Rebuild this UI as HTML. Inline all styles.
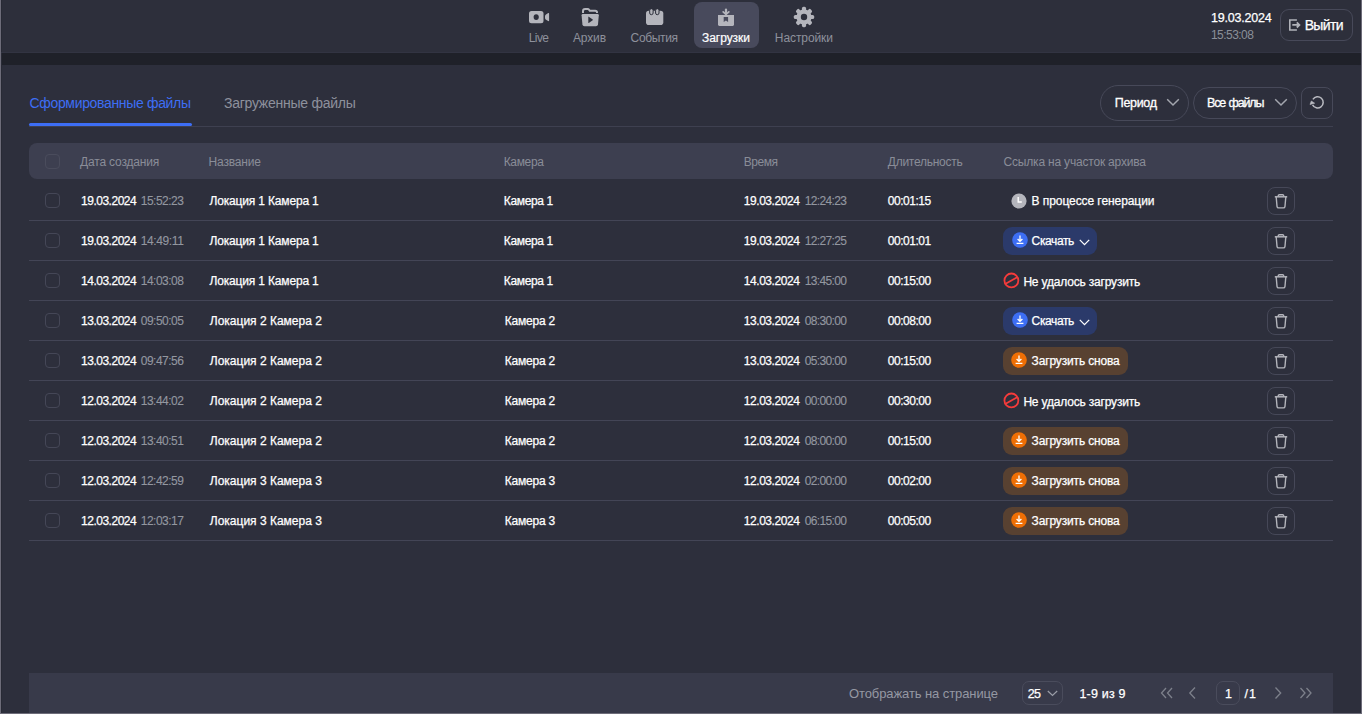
<!DOCTYPE html>
<html><head><meta charset="utf-8">
<style>
*{box-sizing:border-box;margin:0;padding:0}
html,body{width:1362px;height:714px;overflow:hidden;background:#2d2f3b;font-family:"Liberation Sans",sans-serif;}
.abs{position:absolute}
.t{position:absolute;white-space:pre}
#frame{position:absolute;left:0;top:0;width:1362px;height:714px;border-left:1px solid #6d6c79;border-right:1px solid #6d6c79;border-bottom:1px solid #6d6c79;}
#hdr{position:absolute;left:1px;top:0;width:1360px;height:53px;background:#2d2f3b}
#band{position:absolute;left:1px;top:53px;width:1360px;height:12px;background:#1f2129}
#panel{position:absolute;left:2px;top:65px;width:1359px;height:648px;background:#2d2f3c;border-radius:3px 3px 0 0}
#lcol{position:absolute;left:1px;top:0;width:1px;height:713px;background:#282a35}
.box{position:absolute}
</style></head><body>
<div id="hdr"></div>
<div id="band"></div>
<div id="panel"></div>
<div id="lcol"></div>
<div class="box" style="left:1px;top:52px;width:1360px;height:1px;background:#323442"></div>
<div class="box" style="left:694px;top:2px;width:65px;height:46px;background:#484a5c;border-radius:8px"></div>
<svg class="abs" style="left:529px;top:11px" width="21" height="13" viewBox="0 0 21 13"><rect x="0" y="0" width="14.5" height="12.2" rx="2.5" fill="#b4b5bc"/><ellipse cx="7.2" cy="6.1" rx="2.6" ry="2.9" fill="#2d2f3b"/><path d="M16 5.2 Q16 3.9 17 3.4 L19.2 2.1 Q20.1 1.7 20.1 2.7 V9.5 Q20.1 10.5 19.2 10.1 L17 8.8 Q16 8.3 16 7.1 Z" fill="#b4b5bc"/></svg>
<svg class="abs" style="left:581px;top:8px" width="19" height="19" viewBox="0 0 19 19"><path d="M2 4.9 V3.2 Q2 1.1 4.1 1.1 H6.6 Q7.6 1.1 8.3 2 L8.8 2.8 H14.2 Q16 2.8 16 4.6 V4.9" fill="none" stroke="#b4b5bc" stroke-width="2"/><path d="M0.6 7.2 Q0.6 6 1.8 6 H16.6 Q17.8 6 17.8 7.2 L17 16.3 Q16.8 18.2 14.9 18.2 H3.5 Q1.6 18.2 1.4 16.3 Z" fill="#b4b5bc"/><path d="M7.3 9 Q7.3 8.4 7.8 8.7 L11.7 11.5 Q12.1 11.9 11.7 12.2 L7.8 15 Q7.3 15.3 7.3 14.7 Z" fill="#2d2f3b"/></svg>
<svg class="abs" style="left:646px;top:9px" width="18" height="16" viewBox="0 0 18 16"><rect x="0" y="1.8" width="17.3" height="14.2" rx="2.8" fill="#b4b5bc"/><rect x="3.7" y="-0.3" width="3.4" height="6" rx="1.7" fill="#b4b5bc" stroke="#2d2f3b" stroke-width="1"/><rect x="9.6" y="-0.3" width="3.4" height="6" rx="1.7" fill="#b4b5bc" stroke="#2d2f3b" stroke-width="1"/></svg>
<svg class="abs" style="left:717px;top:7px" width="18" height="20" viewBox="0 0 18 20"><path d="M9 2.6 V6.4" stroke="#b4b5bc" stroke-width="2.2" stroke-linecap="round"/><path d="M6.2 4.9 L9 7.4 L11.8 4.9" fill="none" stroke="#b4b5bc" stroke-width="1.8" stroke-linecap="round" stroke-linejoin="round"/><path d="M1 8 H17 V17.6 Q17 18.9 15.7 18.9 H2.3 Q1 18.9 1 17.6 Z" fill="#b4b5bc"/><path d="M6.7 9.9 H11.1 V15.1 L8.9 13.6 L6.7 15.1 Z" fill="#484a5c"/></svg>
<svg class="abs" style="left:793px;top:6px" width="22" height="22" viewBox="-11 -11 22 22"><rect x="-2.1" y="-10.2" width="4.2" height="5" rx="1.6" transform="rotate(0)" fill="#b4b5bc"/><rect x="-2.1" y="-10.2" width="4.2" height="5" rx="1.6" transform="rotate(45)" fill="#b4b5bc"/><rect x="-2.1" y="-10.2" width="4.2" height="5" rx="1.6" transform="rotate(90)" fill="#b4b5bc"/><rect x="-2.1" y="-10.2" width="4.2" height="5" rx="1.6" transform="rotate(135)" fill="#b4b5bc"/><rect x="-2.1" y="-10.2" width="4.2" height="5" rx="1.6" transform="rotate(180)" fill="#b4b5bc"/><rect x="-2.1" y="-10.2" width="4.2" height="5" rx="1.6" transform="rotate(225)" fill="#b4b5bc"/><rect x="-2.1" y="-10.2" width="4.2" height="5" rx="1.6" transform="rotate(270)" fill="#b4b5bc"/><rect x="-2.1" y="-10.2" width="4.2" height="5" rx="1.6" transform="rotate(315)" fill="#b4b5bc"/><circle r="7.6" fill="#b4b5bc"/><circle r="3.2" fill="#2d2f3b"/></svg>
<div class="t" style="left:528.70px;top:31px;font-size:12px;line-height:14px;color:#8e919c;letter-spacing:-0.567px;">Live</div>
<div class="t" style="left:573.00px;top:31px;font-size:12px;line-height:14px;color:#8e919c;letter-spacing:-0.150px;">Архив</div>
<div class="t" style="left:630.60px;top:31px;font-size:12px;line-height:14px;color:#8e919c;letter-spacing:-0.358px;">События</div>
<div class="t" style="left:702.00px;top:31px;font-size:12px;line-height:14px;color:#ffffff;-webkit-text-stroke:0.2px #ffffff;letter-spacing:-0.043px;">Загрузки</div>
<div class="t" style="left:774.80px;top:31px;font-size:12px;line-height:14px;color:#8e919c;letter-spacing:-0.081px;">Настройки</div>
<div class="t" style="left:1211.00px;top:11px;font-size:12.5px;line-height:14px;color:#ffffff;-webkit-text-stroke:0.25px #ffffff;letter-spacing:-0.217px;">19.03.2024</div>
<div class="t" style="left:1211.00px;top:28px;font-size:12px;line-height:14px;color:#8b8f99;letter-spacing:-0.557px;">15:53:08</div>
<div class="box" style="left:1280px;top:9px;width:73px;height:32px;border:1px solid #474959;border-radius:9px"></div>
<svg class="abs" style="left:1288px;top:18px" width="14" height="14" viewBox="0 0 14 14"><path d="M8.9 2 H1.8 V12 H8.9" fill="none" stroke="#b0b2b9" stroke-width="1.6"/><path d="M4.3 6.9 H11 M8.8 4.3 L11.4 6.9 L8.8 9.5" fill="none" stroke="#b0b2b9" stroke-width="1.8"/></svg>
<div class="t" style="left:1304.70px;top:17px;font-size:14px;line-height:16px;color:#ffffff;-webkit-text-stroke:0.25px #ffffff;letter-spacing:-0.663px;">Выйти</div>
<div class="t" style="left:29.50px;top:95px;font-size:14px;line-height:16px;color:#3d6ef5;letter-spacing:-0.334px;">Сформированные файлы</div>
<div class="t" style="left:224.00px;top:95px;font-size:14px;line-height:16px;color:#8e919c;letter-spacing:-0.253px;">Загруженные файлы</div>
<div class="box" style="left:29px;top:126px;width:1304px;height:1px;background:#3e4050"></div>
<div class="box" style="left:29px;top:123px;width:163px;height:3px;background:#3d6ef5;border-radius:2px"></div>
<div class="box" style="left:1100px;top:85px;width:89px;height:36px;border:1px solid #474959;border-radius:18px"></div>
<div class="t" style="left:1114.80px;top:96px;font-size:12.5px;line-height:14px;color:#ffffff;-webkit-text-stroke:0.3px #ffffff;letter-spacing:-0.330px;">Период</div>
<svg class="abs" style="left:1166px;top:98px" width="14" height="9" viewBox="0 0 14 9"><path d="M1.2 1.3 L7 7 L12.8 1.3" fill="none" stroke="#a3a6ae" stroke-width="1.5"/></svg>
<div class="box" style="left:1193px;top:87px;width:104px;height:32px;border:1px solid #474959;border-radius:16px"></div>
<div class="t" style="left:1207.00px;top:96px;font-size:12.5px;line-height:14px;color:#ffffff;-webkit-text-stroke:0.3px #ffffff;letter-spacing:-1.163px;word-spacing:1.2px;">Все файлы</div>
<svg class="abs" style="left:1274px;top:98px" width="14" height="9" viewBox="0 0 14 9"><path d="M1.2 1.3 L7 7 L12.8 1.3" fill="none" stroke="#a3a6ae" stroke-width="1.5"/></svg>
<div class="box" style="left:1301px;top:87px;width:32px;height:32px;border:1px solid #474959;border-radius:8px"></div>
<svg class="abs" style="left:1305px;top:91px" width="24" height="24" viewBox="0 0 24 24"><path d="M7.9 8.3 A5.6 5.6 0 1 1 7.6 13.9" fill="none" stroke="#b9bac1" stroke-width="1.5"/><path d="M5 13.5 L6.3 10 L9.7 12.2 Z" fill="#b9bac1" stroke="#b9bac1" stroke-width="0.6" stroke-linejoin="round"/></svg>
<div class="box" style="left:29px;top:143px;width:1304px;height:36px;background:#3d3f50;border-radius:8px"></div>
<div class="box" style="left:45px;top:154px;width:15px;height:15px;border:1px solid #4a4c5c;border-radius:4px"></div>
<div class="t" style="left:80.00px;top:155px;font-size:12px;line-height:14px;color:#8a8d98;letter-spacing:-0.171px;">Дата создания</div>
<div class="t" style="left:208.50px;top:155px;font-size:12px;line-height:14px;color:#8a8d98;letter-spacing:-0.164px;">Название</div>
<div class="t" style="left:503.70px;top:155px;font-size:12px;line-height:14px;color:#8a8d98;letter-spacing:-0.330px;">Камера</div>
<div class="t" style="left:743.80px;top:155px;font-size:12px;line-height:14px;color:#8a8d98;letter-spacing:-0.475px;">Время</div>
<div class="t" style="left:887.80px;top:155px;font-size:12px;line-height:14px;color:#8a8d98;letter-spacing:-0.264px;">Длительность</div>
<div class="t" style="left:1003.60px;top:155px;font-size:12px;line-height:14px;color:#8a8d98;letter-spacing:-0.193px;">Ссылка на участок архива</div>
<div class="box" style="left:29px;top:220px;width:1304px;height:1px;background:#434556"></div>
<div class="box" style="left:45px;top:193px;width:15px;height:15px;border:1px solid #454757;border-radius:4px"></div>
<div class="t" style="left:81.00px;top:194px;font-size:12px;line-height:14px;color:#ffffff;-webkit-text-stroke:0.25px #ffffff;letter-spacing:-0.483px;">19.03.2024</div>
<div class="t" style="left:140.80px;top:194px;font-size:12px;line-height:14px;color:#9397a0;-webkit-text-stroke:0.12px #9397a0;letter-spacing:-0.529px;">15:52:23</div>
<div class="t" style="left:209.50px;top:194px;font-size:12px;line-height:14px;color:#ffffff;-webkit-text-stroke:0.25px #ffffff;letter-spacing:-0.165px;">Локация 1 Камера 1</div>
<div class="t" style="left:503.80px;top:194px;font-size:12px;line-height:14px;color:#ffffff;-webkit-text-stroke:0.25px #ffffff;letter-spacing:-0.350px;">Камера 1</div>
<div class="t" style="left:743.80px;top:194px;font-size:12px;line-height:14px;color:#ffffff;-webkit-text-stroke:0.25px #ffffff;letter-spacing:-0.450px;">19.03.2024</div>
<div class="t" style="left:804.70px;top:194px;font-size:12px;line-height:14px;color:#9397a0;-webkit-text-stroke:0.12px #9397a0;letter-spacing:-0.629px;">12:24:23</div>
<div class="t" style="left:887.80px;top:194px;font-size:12px;line-height:14px;color:#ffffff;-webkit-text-stroke:0.25px #ffffff;letter-spacing:-0.471px;">00:01:15</div>
<div class="box" style="left:1267px;top:187px;width:28px;height:28px;border:1px solid #464858;border-radius:8px"></div>
<svg class="abs" style="left:1274px;top:194px" width="14" height="16" viewBox="0 0 14 16"><path d="M4.3 2.2 V1.8 Q4.3 0.8 5.3 0.8 H8.7 Q9.7 0.8 9.7 1.8 V2.2" fill="none" stroke="#b4b5bc" stroke-width="1.4"/><path d="M0.8 2.8 H13.2" stroke="#b4b5bc" stroke-width="1.5"/><path d="M2.2 3 L3 12.3 Q3.2 13.9 4.6 13.9 H9.4 Q10.8 13.9 11 12.3 L11.8 3" fill="none" stroke="#b4b5bc" stroke-width="1.4"/></svg>
<svg class="abs" style="left:1011.3px;top:192.9px" width="16" height="16" viewBox="0 0 16 16"><circle cx="8" cy="8" r="7.6" fill="#b4b5bc"/><path d="M7.2 4 V9 H10.8" fill="none" stroke="#ffffff" stroke-width="1.4"/></svg>
<div class="t" style="left:1031.60px;top:194px;font-size:12px;line-height:14px;color:#ffffff;-webkit-text-stroke:0.25px #ffffff;letter-spacing:-0.076px;">В процессе генерации</div>
<div class="box" style="left:29px;top:260px;width:1304px;height:1px;background:#434556"></div>
<div class="box" style="left:45px;top:233px;width:15px;height:15px;border:1px solid #454757;border-radius:4px"></div>
<div class="t" style="left:81.00px;top:234px;font-size:12px;line-height:14px;color:#ffffff;-webkit-text-stroke:0.25px #ffffff;letter-spacing:-0.483px;">19.03.2024</div>
<div class="t" style="left:140.80px;top:234px;font-size:12px;line-height:14px;color:#9397a0;-webkit-text-stroke:0.12px #9397a0;letter-spacing:-0.400px;">14:49:11</div>
<div class="t" style="left:209.50px;top:234px;font-size:12px;line-height:14px;color:#ffffff;-webkit-text-stroke:0.25px #ffffff;letter-spacing:-0.165px;">Локация 1 Камера 1</div>
<div class="t" style="left:503.80px;top:234px;font-size:12px;line-height:14px;color:#ffffff;-webkit-text-stroke:0.25px #ffffff;letter-spacing:-0.350px;">Камера 1</div>
<div class="t" style="left:743.80px;top:234px;font-size:12px;line-height:14px;color:#ffffff;-webkit-text-stroke:0.25px #ffffff;letter-spacing:-0.450px;">19.03.2024</div>
<div class="t" style="left:804.70px;top:234px;font-size:12px;line-height:14px;color:#9397a0;-webkit-text-stroke:0.12px #9397a0;letter-spacing:-0.629px;">12:27:25</div>
<div class="t" style="left:887.80px;top:234px;font-size:12px;line-height:14px;color:#ffffff;-webkit-text-stroke:0.25px #ffffff;letter-spacing:-0.471px;">00:01:01</div>
<div class="box" style="left:1267px;top:227px;width:28px;height:28px;border:1px solid #464858;border-radius:8px"></div>
<svg class="abs" style="left:1274px;top:234px" width="14" height="16" viewBox="0 0 14 16"><path d="M4.3 2.2 V1.8 Q4.3 0.8 5.3 0.8 H8.7 Q9.7 0.8 9.7 1.8 V2.2" fill="none" stroke="#b4b5bc" stroke-width="1.4"/><path d="M0.8 2.8 H13.2" stroke="#b4b5bc" stroke-width="1.5"/><path d="M2.2 3 L3 12.3 Q3.2 13.9 4.6 13.9 H9.4 Q10.8 13.9 11 12.3 L11.8 3" fill="none" stroke="#b4b5bc" stroke-width="1.4"/></svg>
<div class="box" style="left:1003px;top:227px;width:94px;height:28px;background:#2b3a6a;border-radius:9px"></div>
<svg class="abs" style="left:1011.5px;top:232px" width="16" height="16" viewBox="0 0 16 16"><circle cx="8" cy="8" r="7.8" fill="#3d6ef5"/><path d="M8 3.6 V9.2 M5.6 7 L8 9.4 L10.4 7 M4.6 11.4 H11.4" fill="none" stroke="#ffffff" stroke-width="1.3"/></svg>
<div class="t" style="left:1031.60px;top:234px;font-size:12px;line-height:14px;color:#ffffff;-webkit-text-stroke:0.25px #ffffff;letter-spacing:-0.383px;">Скачать</div>
<svg class="abs" style="left:1078.5px;top:238.5px" width="11" height="7" viewBox="0 0 11 7"><path d="M0.8 0.9 L5.5 5.6 L10.2 0.9" fill="none" stroke="#ffffff" stroke-width="1.3"/></svg>
<div class="box" style="left:29px;top:300px;width:1304px;height:1px;background:#434556"></div>
<div class="box" style="left:45px;top:273px;width:15px;height:15px;border:1px solid #454757;border-radius:4px"></div>
<div class="t" style="left:81.00px;top:274px;font-size:12px;line-height:14px;color:#ffffff;-webkit-text-stroke:0.25px #ffffff;letter-spacing:-0.483px;">14.03.2024</div>
<div class="t" style="left:140.80px;top:274px;font-size:12px;line-height:14px;color:#9397a0;-webkit-text-stroke:0.12px #9397a0;letter-spacing:-0.529px;">14:03:08</div>
<div class="t" style="left:209.50px;top:274px;font-size:12px;line-height:14px;color:#ffffff;-webkit-text-stroke:0.25px #ffffff;letter-spacing:-0.165px;">Локация 1 Камера 1</div>
<div class="t" style="left:503.80px;top:274px;font-size:12px;line-height:14px;color:#ffffff;-webkit-text-stroke:0.25px #ffffff;letter-spacing:-0.350px;">Камера 1</div>
<div class="t" style="left:743.80px;top:274px;font-size:12px;line-height:14px;color:#ffffff;-webkit-text-stroke:0.25px #ffffff;letter-spacing:-0.450px;">14.03.2024</div>
<div class="t" style="left:804.70px;top:274px;font-size:12px;line-height:14px;color:#9397a0;-webkit-text-stroke:0.12px #9397a0;letter-spacing:-0.629px;">13:45:00</div>
<div class="t" style="left:887.80px;top:274px;font-size:12px;line-height:14px;color:#ffffff;-webkit-text-stroke:0.25px #ffffff;letter-spacing:-0.471px;">00:15:00</div>
<div class="box" style="left:1267px;top:267px;width:28px;height:28px;border:1px solid #464858;border-radius:8px"></div>
<svg class="abs" style="left:1274px;top:274px" width="14" height="16" viewBox="0 0 14 16"><path d="M4.3 2.2 V1.8 Q4.3 0.8 5.3 0.8 H8.7 Q9.7 0.8 9.7 1.8 V2.2" fill="none" stroke="#b4b5bc" stroke-width="1.4"/><path d="M0.8 2.8 H13.2" stroke="#b4b5bc" stroke-width="1.5"/><path d="M2.2 3 L3 12.3 Q3.2 13.9 4.6 13.9 H9.4 Q10.8 13.9 11 12.3 L11.8 3" fill="none" stroke="#b4b5bc" stroke-width="1.4"/></svg>
<svg class="abs" style="left:1003px;top:272px" width="17" height="17" viewBox="0 0 17 17"><circle cx="8.4" cy="8.45" r="6.95" fill="none" stroke="#f53b3b" stroke-width="1.8"/><path d="M2.6 11.7 L14.2 5.2" stroke="#f53b3b" stroke-width="1.8"/></svg>
<div class="t" style="left:1023.40px;top:275px;font-size:12px;line-height:14px;color:#ffffff;-webkit-text-stroke:0.25px #ffffff;letter-spacing:-0.184px;">Не удалось загрузить</div>
<div class="box" style="left:29px;top:340px;width:1304px;height:1px;background:#434556"></div>
<div class="box" style="left:45px;top:313px;width:15px;height:15px;border:1px solid #454757;border-radius:4px"></div>
<div class="t" style="left:81.00px;top:314px;font-size:12px;line-height:14px;color:#ffffff;-webkit-text-stroke:0.25px #ffffff;letter-spacing:-0.483px;">13.03.2024</div>
<div class="t" style="left:140.80px;top:314px;font-size:12px;line-height:14px;color:#9397a0;-webkit-text-stroke:0.12px #9397a0;letter-spacing:-0.529px;">09:50:05</div>
<div class="t" style="left:209.80px;top:314px;font-size:12px;line-height:14px;color:#ffffff;-webkit-text-stroke:0.25px #ffffff;">Локация 2 Камера 2</div>
<div class="t" style="left:504.80px;top:314px;font-size:12px;line-height:14px;color:#ffffff;-webkit-text-stroke:0.25px #ffffff;letter-spacing:-0.236px;">Камера 2</div>
<div class="t" style="left:743.80px;top:314px;font-size:12px;line-height:14px;color:#ffffff;-webkit-text-stroke:0.25px #ffffff;letter-spacing:-0.450px;">13.03.2024</div>
<div class="t" style="left:804.70px;top:314px;font-size:12px;line-height:14px;color:#9397a0;-webkit-text-stroke:0.12px #9397a0;letter-spacing:-0.629px;">08:30:00</div>
<div class="t" style="left:887.80px;top:314px;font-size:12px;line-height:14px;color:#ffffff;-webkit-text-stroke:0.25px #ffffff;letter-spacing:-0.471px;">00:08:00</div>
<div class="box" style="left:1267px;top:307px;width:28px;height:28px;border:1px solid #464858;border-radius:8px"></div>
<svg class="abs" style="left:1274px;top:314px" width="14" height="16" viewBox="0 0 14 16"><path d="M4.3 2.2 V1.8 Q4.3 0.8 5.3 0.8 H8.7 Q9.7 0.8 9.7 1.8 V2.2" fill="none" stroke="#b4b5bc" stroke-width="1.4"/><path d="M0.8 2.8 H13.2" stroke="#b4b5bc" stroke-width="1.5"/><path d="M2.2 3 L3 12.3 Q3.2 13.9 4.6 13.9 H9.4 Q10.8 13.9 11 12.3 L11.8 3" fill="none" stroke="#b4b5bc" stroke-width="1.4"/></svg>
<div class="box" style="left:1003px;top:307px;width:94px;height:28px;background:#2b3a6a;border-radius:9px"></div>
<svg class="abs" style="left:1011.5px;top:312px" width="16" height="16" viewBox="0 0 16 16"><circle cx="8" cy="8" r="7.8" fill="#3d6ef5"/><path d="M8 3.6 V9.2 M5.6 7 L8 9.4 L10.4 7 M4.6 11.4 H11.4" fill="none" stroke="#ffffff" stroke-width="1.3"/></svg>
<div class="t" style="left:1031.60px;top:314px;font-size:12px;line-height:14px;color:#ffffff;-webkit-text-stroke:0.25px #ffffff;letter-spacing:-0.383px;">Скачать</div>
<svg class="abs" style="left:1078.5px;top:318.5px" width="11" height="7" viewBox="0 0 11 7"><path d="M0.8 0.9 L5.5 5.6 L10.2 0.9" fill="none" stroke="#ffffff" stroke-width="1.3"/></svg>
<div class="box" style="left:29px;top:380px;width:1304px;height:1px;background:#434556"></div>
<div class="box" style="left:45px;top:353px;width:15px;height:15px;border:1px solid #454757;border-radius:4px"></div>
<div class="t" style="left:81.00px;top:354px;font-size:12px;line-height:14px;color:#ffffff;-webkit-text-stroke:0.25px #ffffff;letter-spacing:-0.483px;">13.03.2024</div>
<div class="t" style="left:140.80px;top:354px;font-size:12px;line-height:14px;color:#9397a0;-webkit-text-stroke:0.12px #9397a0;letter-spacing:-0.529px;">09:47:56</div>
<div class="t" style="left:209.80px;top:354px;font-size:12px;line-height:14px;color:#ffffff;-webkit-text-stroke:0.25px #ffffff;">Локация 2 Камера 2</div>
<div class="t" style="left:504.80px;top:354px;font-size:12px;line-height:14px;color:#ffffff;-webkit-text-stroke:0.25px #ffffff;letter-spacing:-0.236px;">Камера 2</div>
<div class="t" style="left:743.80px;top:354px;font-size:12px;line-height:14px;color:#ffffff;-webkit-text-stroke:0.25px #ffffff;letter-spacing:-0.450px;">13.03.2024</div>
<div class="t" style="left:804.70px;top:354px;font-size:12px;line-height:14px;color:#9397a0;-webkit-text-stroke:0.12px #9397a0;letter-spacing:-0.629px;">05:30:00</div>
<div class="t" style="left:887.80px;top:354px;font-size:12px;line-height:14px;color:#ffffff;-webkit-text-stroke:0.25px #ffffff;letter-spacing:-0.471px;">00:15:00</div>
<div class="box" style="left:1267px;top:347px;width:28px;height:28px;border:1px solid #464858;border-radius:8px"></div>
<svg class="abs" style="left:1274px;top:354px" width="14" height="16" viewBox="0 0 14 16"><path d="M4.3 2.2 V1.8 Q4.3 0.8 5.3 0.8 H8.7 Q9.7 0.8 9.7 1.8 V2.2" fill="none" stroke="#b4b5bc" stroke-width="1.4"/><path d="M0.8 2.8 H13.2" stroke="#b4b5bc" stroke-width="1.5"/><path d="M2.2 3 L3 12.3 Q3.2 13.9 4.6 13.9 H9.4 Q10.8 13.9 11 12.3 L11.8 3" fill="none" stroke="#b4b5bc" stroke-width="1.4"/></svg>
<div class="box" style="left:1003px;top:347px;width:125px;height:28px;background:#584131;border-radius:9px"></div>
<svg class="abs" style="left:1011px;top:352px" width="16" height="16" viewBox="0 0 16 16"><circle cx="8" cy="8" r="7.8" fill="#ef6f05"/><path d="M8 3.6 V9.2 M5.6 7 L8 9.4 L10.4 7 M4.6 11.4 H11.4" fill="none" stroke="#ffffff" stroke-width="1.3"/></svg>
<div class="t" style="left:1031.60px;top:354px;font-size:12px;line-height:14px;color:#ffffff;-webkit-text-stroke:0.25px #ffffff;letter-spacing:-0.154px;">Загрузить снова</div>
<div class="box" style="left:29px;top:420px;width:1304px;height:1px;background:#434556"></div>
<div class="box" style="left:45px;top:393px;width:15px;height:15px;border:1px solid #454757;border-radius:4px"></div>
<div class="t" style="left:81.00px;top:394px;font-size:12px;line-height:14px;color:#ffffff;-webkit-text-stroke:0.25px #ffffff;letter-spacing:-0.483px;">12.03.2024</div>
<div class="t" style="left:140.80px;top:394px;font-size:12px;line-height:14px;color:#9397a0;-webkit-text-stroke:0.12px #9397a0;letter-spacing:-0.529px;">13:44:02</div>
<div class="t" style="left:209.80px;top:394px;font-size:12px;line-height:14px;color:#ffffff;-webkit-text-stroke:0.25px #ffffff;">Локация 2 Камера 2</div>
<div class="t" style="left:504.80px;top:394px;font-size:12px;line-height:14px;color:#ffffff;-webkit-text-stroke:0.25px #ffffff;letter-spacing:-0.236px;">Камера 2</div>
<div class="t" style="left:743.80px;top:394px;font-size:12px;line-height:14px;color:#ffffff;-webkit-text-stroke:0.25px #ffffff;letter-spacing:-0.450px;">12.03.2024</div>
<div class="t" style="left:804.70px;top:394px;font-size:12px;line-height:14px;color:#9397a0;-webkit-text-stroke:0.12px #9397a0;letter-spacing:-0.629px;">00:00:00</div>
<div class="t" style="left:887.80px;top:394px;font-size:12px;line-height:14px;color:#ffffff;-webkit-text-stroke:0.25px #ffffff;letter-spacing:-0.471px;">00:30:00</div>
<div class="box" style="left:1267px;top:387px;width:28px;height:28px;border:1px solid #464858;border-radius:8px"></div>
<svg class="abs" style="left:1274px;top:394px" width="14" height="16" viewBox="0 0 14 16"><path d="M4.3 2.2 V1.8 Q4.3 0.8 5.3 0.8 H8.7 Q9.7 0.8 9.7 1.8 V2.2" fill="none" stroke="#b4b5bc" stroke-width="1.4"/><path d="M0.8 2.8 H13.2" stroke="#b4b5bc" stroke-width="1.5"/><path d="M2.2 3 L3 12.3 Q3.2 13.9 4.6 13.9 H9.4 Q10.8 13.9 11 12.3 L11.8 3" fill="none" stroke="#b4b5bc" stroke-width="1.4"/></svg>
<svg class="abs" style="left:1003px;top:392px" width="17" height="17" viewBox="0 0 17 17"><circle cx="8.4" cy="8.45" r="6.95" fill="none" stroke="#f53b3b" stroke-width="1.8"/><path d="M2.6 11.7 L14.2 5.2" stroke="#f53b3b" stroke-width="1.8"/></svg>
<div class="t" style="left:1023.40px;top:395px;font-size:12px;line-height:14px;color:#ffffff;-webkit-text-stroke:0.25px #ffffff;letter-spacing:-0.184px;">Не удалось загрузить</div>
<div class="box" style="left:29px;top:460px;width:1304px;height:1px;background:#434556"></div>
<div class="box" style="left:45px;top:433px;width:15px;height:15px;border:1px solid #454757;border-radius:4px"></div>
<div class="t" style="left:81.00px;top:434px;font-size:12px;line-height:14px;color:#ffffff;-webkit-text-stroke:0.25px #ffffff;letter-spacing:-0.483px;">12.03.2024</div>
<div class="t" style="left:140.80px;top:434px;font-size:12px;line-height:14px;color:#9397a0;-webkit-text-stroke:0.12px #9397a0;letter-spacing:-0.529px;">13:40:51</div>
<div class="t" style="left:209.80px;top:434px;font-size:12px;line-height:14px;color:#ffffff;-webkit-text-stroke:0.25px #ffffff;">Локация 2 Камера 2</div>
<div class="t" style="left:504.80px;top:434px;font-size:12px;line-height:14px;color:#ffffff;-webkit-text-stroke:0.25px #ffffff;letter-spacing:-0.236px;">Камера 2</div>
<div class="t" style="left:743.80px;top:434px;font-size:12px;line-height:14px;color:#ffffff;-webkit-text-stroke:0.25px #ffffff;letter-spacing:-0.450px;">12.03.2024</div>
<div class="t" style="left:804.70px;top:434px;font-size:12px;line-height:14px;color:#9397a0;-webkit-text-stroke:0.12px #9397a0;letter-spacing:-0.629px;">08:00:00</div>
<div class="t" style="left:887.80px;top:434px;font-size:12px;line-height:14px;color:#ffffff;-webkit-text-stroke:0.25px #ffffff;letter-spacing:-0.471px;">00:15:00</div>
<div class="box" style="left:1267px;top:427px;width:28px;height:28px;border:1px solid #464858;border-radius:8px"></div>
<svg class="abs" style="left:1274px;top:434px" width="14" height="16" viewBox="0 0 14 16"><path d="M4.3 2.2 V1.8 Q4.3 0.8 5.3 0.8 H8.7 Q9.7 0.8 9.7 1.8 V2.2" fill="none" stroke="#b4b5bc" stroke-width="1.4"/><path d="M0.8 2.8 H13.2" stroke="#b4b5bc" stroke-width="1.5"/><path d="M2.2 3 L3 12.3 Q3.2 13.9 4.6 13.9 H9.4 Q10.8 13.9 11 12.3 L11.8 3" fill="none" stroke="#b4b5bc" stroke-width="1.4"/></svg>
<div class="box" style="left:1003px;top:427px;width:125px;height:28px;background:#584131;border-radius:9px"></div>
<svg class="abs" style="left:1011px;top:432px" width="16" height="16" viewBox="0 0 16 16"><circle cx="8" cy="8" r="7.8" fill="#ef6f05"/><path d="M8 3.6 V9.2 M5.6 7 L8 9.4 L10.4 7 M4.6 11.4 H11.4" fill="none" stroke="#ffffff" stroke-width="1.3"/></svg>
<div class="t" style="left:1031.60px;top:434px;font-size:12px;line-height:14px;color:#ffffff;-webkit-text-stroke:0.25px #ffffff;letter-spacing:-0.154px;">Загрузить снова</div>
<div class="box" style="left:29px;top:500px;width:1304px;height:1px;background:#434556"></div>
<div class="box" style="left:45px;top:473px;width:15px;height:15px;border:1px solid #454757;border-radius:4px"></div>
<div class="t" style="left:81.00px;top:474px;font-size:12px;line-height:14px;color:#ffffff;-webkit-text-stroke:0.25px #ffffff;letter-spacing:-0.483px;">12.03.2024</div>
<div class="t" style="left:140.80px;top:474px;font-size:12px;line-height:14px;color:#9397a0;-webkit-text-stroke:0.12px #9397a0;letter-spacing:-0.529px;">12:42:59</div>
<div class="t" style="left:209.80px;top:474px;font-size:12px;line-height:14px;color:#ffffff;-webkit-text-stroke:0.25px #ffffff;">Локация 3 Камера 3</div>
<div class="t" style="left:504.80px;top:474px;font-size:12px;line-height:14px;color:#ffffff;-webkit-text-stroke:0.25px #ffffff;letter-spacing:-0.236px;">Камера 3</div>
<div class="t" style="left:743.80px;top:474px;font-size:12px;line-height:14px;color:#ffffff;-webkit-text-stroke:0.25px #ffffff;letter-spacing:-0.450px;">12.03.2024</div>
<div class="t" style="left:804.70px;top:474px;font-size:12px;line-height:14px;color:#9397a0;-webkit-text-stroke:0.12px #9397a0;letter-spacing:-0.629px;">02:00:00</div>
<div class="t" style="left:887.80px;top:474px;font-size:12px;line-height:14px;color:#ffffff;-webkit-text-stroke:0.25px #ffffff;letter-spacing:-0.471px;">00:02:00</div>
<div class="box" style="left:1267px;top:467px;width:28px;height:28px;border:1px solid #464858;border-radius:8px"></div>
<svg class="abs" style="left:1274px;top:474px" width="14" height="16" viewBox="0 0 14 16"><path d="M4.3 2.2 V1.8 Q4.3 0.8 5.3 0.8 H8.7 Q9.7 0.8 9.7 1.8 V2.2" fill="none" stroke="#b4b5bc" stroke-width="1.4"/><path d="M0.8 2.8 H13.2" stroke="#b4b5bc" stroke-width="1.5"/><path d="M2.2 3 L3 12.3 Q3.2 13.9 4.6 13.9 H9.4 Q10.8 13.9 11 12.3 L11.8 3" fill="none" stroke="#b4b5bc" stroke-width="1.4"/></svg>
<div class="box" style="left:1003px;top:467px;width:125px;height:28px;background:#584131;border-radius:9px"></div>
<svg class="abs" style="left:1011px;top:472px" width="16" height="16" viewBox="0 0 16 16"><circle cx="8" cy="8" r="7.8" fill="#ef6f05"/><path d="M8 3.6 V9.2 M5.6 7 L8 9.4 L10.4 7 M4.6 11.4 H11.4" fill="none" stroke="#ffffff" stroke-width="1.3"/></svg>
<div class="t" style="left:1031.60px;top:474px;font-size:12px;line-height:14px;color:#ffffff;-webkit-text-stroke:0.25px #ffffff;letter-spacing:-0.154px;">Загрузить снова</div>
<div class="box" style="left:29px;top:540px;width:1304px;height:1px;background:#434556"></div>
<div class="box" style="left:45px;top:513px;width:15px;height:15px;border:1px solid #454757;border-radius:4px"></div>
<div class="t" style="left:81.00px;top:514px;font-size:12px;line-height:14px;color:#ffffff;-webkit-text-stroke:0.25px #ffffff;letter-spacing:-0.483px;">12.03.2024</div>
<div class="t" style="left:140.80px;top:514px;font-size:12px;line-height:14px;color:#9397a0;-webkit-text-stroke:0.12px #9397a0;letter-spacing:-0.529px;">12:03:17</div>
<div class="t" style="left:209.80px;top:514px;font-size:12px;line-height:14px;color:#ffffff;-webkit-text-stroke:0.25px #ffffff;">Локация 3 Камера 3</div>
<div class="t" style="left:504.80px;top:514px;font-size:12px;line-height:14px;color:#ffffff;-webkit-text-stroke:0.25px #ffffff;letter-spacing:-0.236px;">Камера 3</div>
<div class="t" style="left:743.80px;top:514px;font-size:12px;line-height:14px;color:#ffffff;-webkit-text-stroke:0.25px #ffffff;letter-spacing:-0.450px;">12.03.2024</div>
<div class="t" style="left:804.70px;top:514px;font-size:12px;line-height:14px;color:#9397a0;-webkit-text-stroke:0.12px #9397a0;letter-spacing:-0.629px;">06:15:00</div>
<div class="t" style="left:887.80px;top:514px;font-size:12px;line-height:14px;color:#ffffff;-webkit-text-stroke:0.25px #ffffff;letter-spacing:-0.471px;">00:05:00</div>
<div class="box" style="left:1267px;top:507px;width:28px;height:28px;border:1px solid #464858;border-radius:8px"></div>
<svg class="abs" style="left:1274px;top:514px" width="14" height="16" viewBox="0 0 14 16"><path d="M4.3 2.2 V1.8 Q4.3 0.8 5.3 0.8 H8.7 Q9.7 0.8 9.7 1.8 V2.2" fill="none" stroke="#b4b5bc" stroke-width="1.4"/><path d="M0.8 2.8 H13.2" stroke="#b4b5bc" stroke-width="1.5"/><path d="M2.2 3 L3 12.3 Q3.2 13.9 4.6 13.9 H9.4 Q10.8 13.9 11 12.3 L11.8 3" fill="none" stroke="#b4b5bc" stroke-width="1.4"/></svg>
<div class="box" style="left:1003px;top:507px;width:125px;height:28px;background:#584131;border-radius:9px"></div>
<svg class="abs" style="left:1011px;top:512px" width="16" height="16" viewBox="0 0 16 16"><circle cx="8" cy="8" r="7.8" fill="#ef6f05"/><path d="M8 3.6 V9.2 M5.6 7 L8 9.4 L10.4 7 M4.6 11.4 H11.4" fill="none" stroke="#ffffff" stroke-width="1.3"/></svg>
<div class="t" style="left:1031.60px;top:514px;font-size:12px;line-height:14px;color:#ffffff;-webkit-text-stroke:0.25px #ffffff;letter-spacing:-0.154px;">Загрузить снова</div>
<div class="box" style="left:29px;top:673px;width:1304px;height:40px;background:#383a4a"></div>
<div class="t" style="left:849.00px;top:686px;font-size:13px;line-height:15px;color:#9598a3;letter-spacing:-0.093px;">Отображать на странице</div>
<div class="box" style="left:1022px;top:681px;width:41px;height:24px;border:1px solid #4a4c5c;border-radius:7px"></div>
<div class="t" style="left:1027.70px;top:687px;font-size:12.5px;line-height:14px;color:#ffffff;-webkit-text-stroke:0.25px #ffffff;letter-spacing:-0.600px;">25</div>
<svg class="abs" style="left:1047px;top:690px" width="11" height="7" viewBox="0 0 11 7"><path d="M0.8 1 L5.5 5.5 L10.2 1" fill="none" stroke="#9b9ea8" stroke-width="1.2"/></svg>
<div class="t" style="left:1079.40px;top:687px;font-size:12.5px;line-height:14px;color:#ffffff;-webkit-text-stroke:0.25px #ffffff;letter-spacing:0.214px;">1-9 из 9</div>
<svg class="abs" style="left:1160px;top:687px" width="15" height="12" viewBox="0 0 15 12"><path d="M6 1 L1.5 6 L6 11 M12 1 L7.5 6 L12 11" fill="none" stroke="#7d808b" stroke-width="1.3"/></svg>
<svg class="abs" style="left:1188px;top:687px" width="9" height="12" viewBox="0 0 9 12"><path d="M7 0.5 L1.8 6 L7 11.5" fill="none" stroke="#7d808b" stroke-width="1.3"/></svg>
<div class="box" style="left:1216px;top:681px;width:24px;height:24px;border:1px solid #4a4c5c;border-radius:7px"></div>
<div class="t" style="left:1225.00px;top:687px;font-size:12.5px;line-height:14px;color:#ffffff;-webkit-text-stroke:0.25px #ffffff;">1</div>
<div class="t" style="left:1244.60px;top:687px;font-size:12.5px;line-height:14px;color:#ffffff;-webkit-text-stroke:0.25px #ffffff;letter-spacing:1.000px;">/1</div>
<svg class="abs" style="left:1274px;top:687px" width="9" height="12" viewBox="0 0 9 12"><path d="M1.5 0.5 L6.7 6 L1.5 11.5" fill="none" stroke="#7d808b" stroke-width="1.3"/></svg>
<svg class="abs" style="left:1298px;top:687px" width="15" height="12" viewBox="0 0 15 12"><path d="M2.5 1 L7 6 L2.5 11 M8.5 1 L13 6 L8.5 11" fill="none" stroke="#7d808b" stroke-width="1.3"/></svg>
<div id="frame"></div>
</body></html>
